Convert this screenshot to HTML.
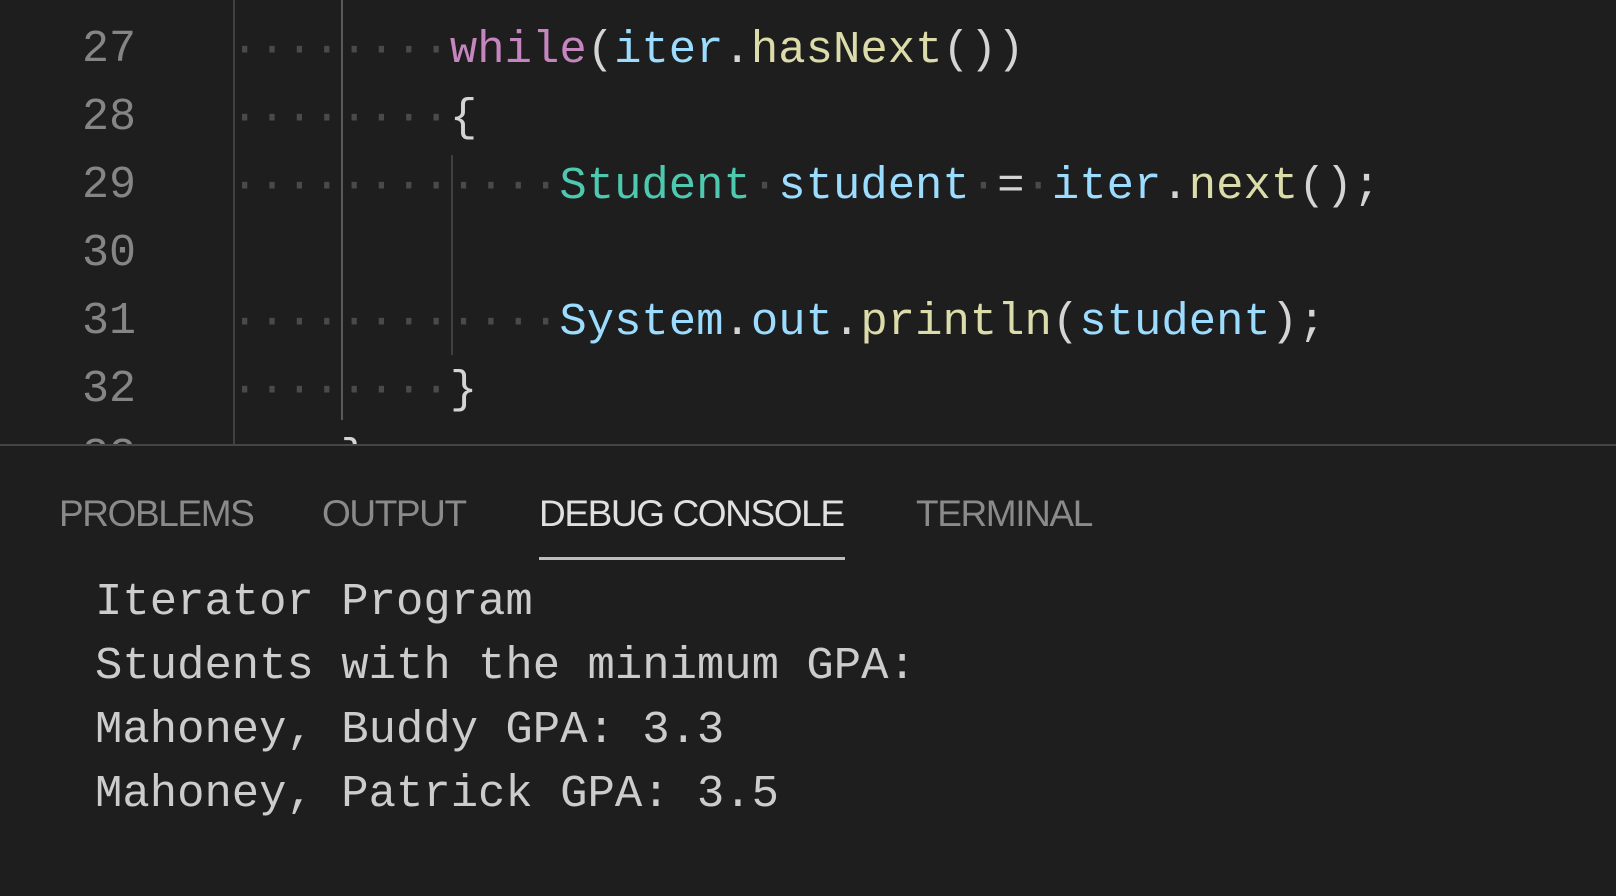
<!DOCTYPE html>
<html><head><meta charset="utf-8"><style>
html,body{margin:0;padding:0;background:#1e1e1e;width:1616px;height:896px;overflow:hidden}
.ed{position:absolute;left:0;top:0;width:1616px;height:444px;overflow:hidden;background:#1e1e1e}
.ln{position:absolute;left:82px;font:45px "Liberation Mono",monospace;color:#858585;line-height:68px}
.code{position:absolute;left:231px;font:45.6px "Liberation Mono",monospace;color:#d4d4d4;line-height:68px;white-space:pre}
.d{color:#4a4a4a}
.k{color:#c586c0}.v{color:#9cdcfe}.f{color:#dcdcaa}.t{color:#4ec9b0}
.g{position:absolute;width:2px;background:#404040}
.sep{position:absolute;left:0;top:444px;width:1616px;height:2px;background:#454545}
.tab{position:absolute;top:491px;font:37px "Liberation Sans",sans-serif;color:#8a8a8a;letter-spacing:-1.4px;line-height:46px}
.out{position:absolute;left:95px;font:45.6px "Liberation Mono",monospace;color:#cccccc;line-height:64px;white-space:pre}
</style></head><body>
<div class="ed">
<div class="g" style="left:233px;top:0;height:444px"></div>
<div class="g" style="left:341px;top:0;height:420px;background:#5a5a5a"></div>
<div class="g" style="left:451px;top:155px;height:200px"></div>
<div class="ln" style="top:16px">27<br>28<br>29<br>30<br>31<br>32<br>33</div>
<div class="code" style="top:16px"><span class="d">········</span><span class="k">while</span>(<span class="v">iter</span>.<span class="f">hasNext</span>())
<span class="d">········</span>{
<span class="d">············</span><span class="t">Student</span><span class="d">·</span><span class="v">student</span><span class="d">·</span>=<span class="d">·</span><span class="v">iter</span>.<span class="f">next</span>();

<span class="d">············</span><span class="v">System</span>.<span class="v">out</span>.<span class="f">println</span>(<span class="v">student</span>);
<span class="d">········</span>}
<span class="d">    </span>}</div>
</div>
<div class="sep"></div>
<div class="tab" style="left:59px">PROBLEMS</div>
<div class="tab" style="left:322px">OUTPUT</div>
<div class="tab" style="left:539px;color:#e0e0e0">DEBUG CONSOLE</div>
<div class="tab" style="left:916px">TERMINAL</div>
<div style="position:absolute;left:539px;top:557px;width:306px;height:3px;background:#bdbdbd"></div>
<div class="out" style="top:570px">Iterator Program
Students with the minimum GPA:
Mahoney, Buddy GPA: 3.3
Mahoney, Patrick GPA: 3.5</div>
</body></html>
